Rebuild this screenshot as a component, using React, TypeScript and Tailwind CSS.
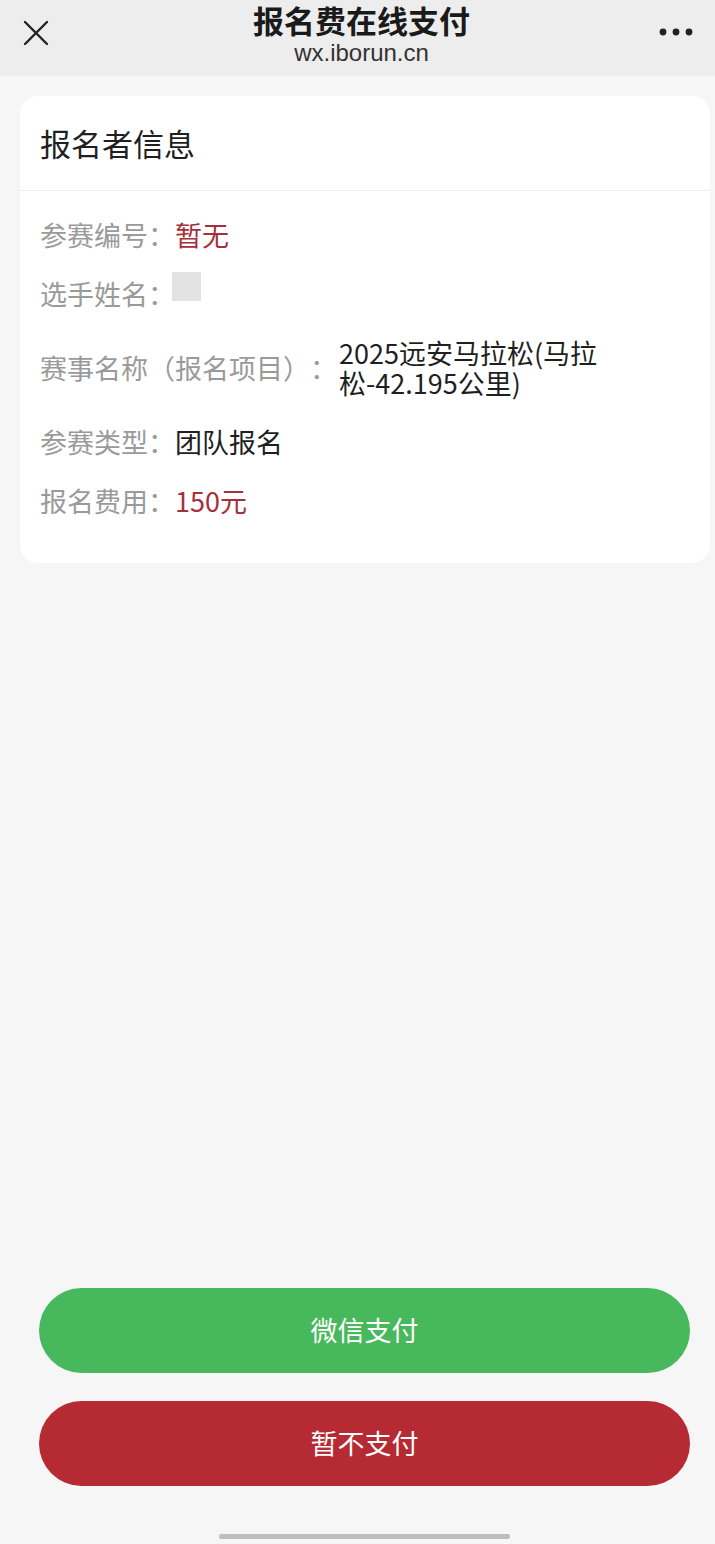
import React from 'react';

const font = { fontFamily: '"Noto Sans CJK SC", "Liberation Sans", sans-serif' };

interface RowProps {
  label: string;
  children: React.ReactNode;
}

const Row: React.FC<RowProps> = ({ label, children }) => (
  <div className="flex items-center">
    <span className="shrink-0 text-[#9a9a9a]">{label}</span>
    {children}
  </div>
);

export default function App() {
  return (
    <div
      className="min-h-[1544px] w-[715px] bg-[#f6f6f6] flex flex-col relative [text-spacing-trim:space-all]"
      style={font}
    >
      {/* WeChat top bar */}
      <header className="h-[76px] bg-[#ededed] flex items-start justify-between px-[22px]">
        <svg width="28" height="28" viewBox="0 0 28 28" className="mt-[19px]">
          <path d="M3 3 L25 25 M25 3 L3 25" stroke="#222" strokeWidth="2.4" strokeLinecap="round" />
        </svg>
        <div className="flex flex-col items-center translate-x-[7px]">
          <div className="text-[31px] font-bold text-[#1a1a1a] leading-[40px]">报名费在线支付</div>
          <div
            className="text-[24px] text-[#333] leading-[26px]"
            style={{ fontFamily: '"Liberation Sans", sans-serif' }}
          >
            wx.iborun.cn
          </div>
        </div>
        <svg width="34" height="8" viewBox="0 0 34 8" className="mt-[28px]">
          <circle cx="4" cy="4" r="3.4" fill="#222" />
          <circle cx="17" cy="4" r="3.4" fill="#222" />
          <circle cx="30" cy="4" r="3.4" fill="#222" />
        </svg>
      </header>

      {/* info card */}
      <div className="mt-[20px] ml-[20px] mr-[5px] bg-white rounded-[18px]">
        <div className="h-[95px] flex items-center px-[20px] border-b border-[#eeeeee]">
          <span className="text-[31px] text-[#1f1f1f]">报名者信息</span>
        </div>
        <div className="px-[20px] pt-[29px] pb-[47px] flex flex-col gap-[29px] text-[27px] leading-[30px]">
          <Row label="参赛编号：">
            <span className="text-[#a5303b]">暂无</span>
          </Row>
          <Row label="选手姓名：">
            <span className="inline-block w-[29px] h-[29px] bg-[#e3e3e3] self-start mt-[-7px] ml-[-3px]" />
          </Row>
          <Row label="赛事名称（报名项目）：">
            <span className="text-[#1f1f1f] w-[270px] ml-[2px]">2025远安马拉松(马拉松-42.195公里)</span>
          </Row>
          <Row label="参赛类型：">
            <span className="text-[#1f1f1f]">团队报名</span>
          </Row>
          <Row label="报名费用：">
            <span className="text-[#a5303b]">150元</span>
          </Row>
        </div>
      </div>

      <div className="flex-1" />

      {/* actions */}
      <div className="flex flex-col gap-[28px] ml-[39px] mr-[25px] mb-[58px]">
        <button className="h-[85px] rounded-full bg-[#47b85b] text-white text-[27px]">微信支付</button>
        <button className="h-[85px] rounded-full bg-[#b52a33] text-white text-[27px]">暂不支付</button>
      </div>

      {/* home indicator */}
      <div className="absolute bottom-[5px] left-[219px] w-[291px] h-[5px] rounded-full bg-[#bdbdbd]" />
    </div>
  );
}
